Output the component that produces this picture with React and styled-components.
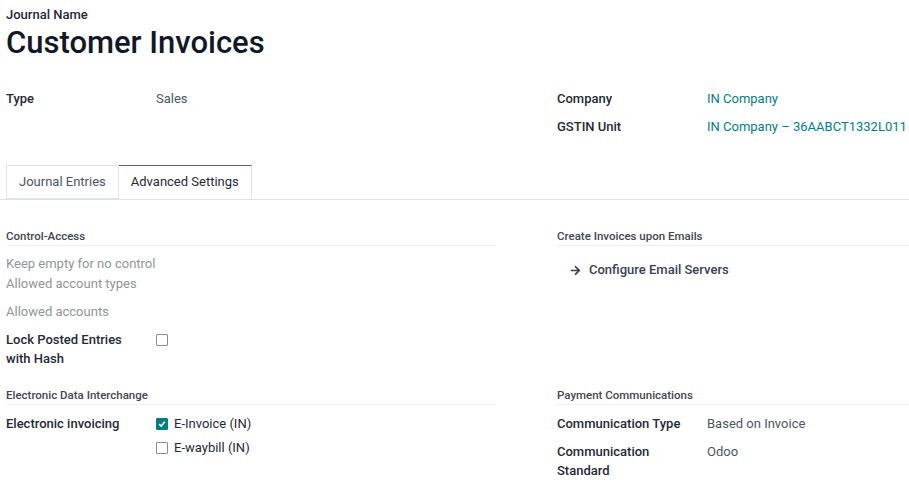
import React from "react";
import styled, { createGlobalStyle } from "styled-components";

const GlobalStyle = createGlobalStyle`
  body {
    margin: 0;
    background: #fff;
    font-family: Roboto, "Liberation Sans", sans-serif;
    font-size: 13px;
    color: #374151;
  }
`;

const Sheet = styled.div`
  width: 909px;
  padding-top: 5px;
`;

const Header = styled.div`
  padding: 0 6px;
`;

const Caption = styled.div`
  font-weight: 500;
  color: #1f2937;
  line-height: 19px;
`;

const Title = styled.h1`
  margin: 1px 0 0;
  font-size: 31px;
  line-height: 36px;
  font-weight: 500;
  color: #111827;
`;

const Columns = styled.div`
  display: grid;
  grid-template-columns: 490px 1fr;
  column-gap: 61px;
  padding: 0 0 0 6px;
  margin-top: ${(p) => p.$top || 0}px;
  row-gap: ${(p) => p.$rowGap || 0}px;
`;

const Group = styled.div`
  display: flex;
  flex-direction: column;
`;

const Row = styled.div`
  display: grid;
  grid-template-columns: 150px 1fr;
  padding: ${(p) => p.$pad ?? 4}px 0;
  margin-top: ${(p) => p.$top || 0}px;
  line-height: 20px;
`;

const Label = styled.div`
  font-weight: 500;
  color: #1f2937;
  padding-right: 15px;
  line-height: ${(p) => p.$lh || 19}px;
`;

const Value = styled.div`
  color: ${(p) => (p.$link ? "#017e84" : "#4b5563")};
`;

const Tabs = styled.div`
  display: flex;
  margin-top: 24px;
  padding-left: 6px;
  border-bottom: 1px solid #dee2e6;
`;

const Tab = styled.div`
  height: ${(p) => (p.$active ? 33 : 32)}px;
  line-height: 32px;
  padding: 0 12px;
  border: 1px solid #dee2e6;
  border-bottom: ${(p) => (p.$active ? "none" : "1px solid #dee2e6")};
  border-top-color: ${(p) => (p.$active ? "#6f5568" : "#dee2e6")};
  border-left-width: ${(p) => (p.$active ? 0 : 1)}px;
  margin-bottom: ${(p) => (p.$active ? -1 : 0)}px;
  background: #fff;
  color: ${(p) => (p.$active ? "#1f2937" : "#4b5563")};
`;

const SectionTitle = styled.div`
  font-size: 11.5px;
  font-weight: 500;
  color: #3f4650;
  line-height: 16px;
  border-bottom: 1px solid #eef0f2;
  padding-bottom: 1px;
`;

const Hint = styled.div`
  color: #8f959a;
  line-height: 20px;
  margin-top: ${(p) => p.$top || 0}px;
`;

const Box = styled.span`
  display: inline-flex;
  align-items: center;
  justify-content: center;
  width: 12px;
  height: 12px;
  box-sizing: border-box;
  border: 1px solid ${(p) => (p.$checked ? "#017e84" : "#8a9096")};
  background: ${(p) => (p.$checked ? "#017e84" : "#fff")};
  border-radius: 1px;
  flex: none;
`;

const CheckLine = styled.div`
  display: flex;
  align-items: center;
  gap: 6px;
  height: ${(p) => p.$h || 20}px;
  color: #1f2937;
  margin-top: ${(p) => p.$top || 0}px;
`;

const ActionLink = styled.div`
  display: flex;
  align-items: center;
  gap: 8px;
  margin: 14px 0 0 13px;
  line-height: 20px;
  font-weight: 500;
  color: #374151;
`;

const CheckBox = ({ checked }) => (
  <Box $checked={checked}>
    {checked && (
      <svg width="8" height="8" viewBox="0 0 8 8">
        <path d="M1.2 4.2 L3.2 6 L6.8 1.8" fill="none" stroke="#fff" strokeWidth="1.6" />
      </svg>
    )}
  </Box>
);

const Arrow = () => (
  <svg width="11" height="11" viewBox="0 0 448 512" fill="#374151">
    <path d="M190.5 66.9l22.2-22.2c9.4-9.4 24.6-9.4 33.9 0L441 239c9.4 9.4 9.4 24.6 0 33.9L246.6 467.3c-9.4 9.4-24.6 9.4-33.9 0l-22.2-22.2c-9.5-9.5-9.3-25 .4-34.3L311.4 296H24c-13.3 0-24-10.7-24-24v-32c0-13.3 10.7-24 24-24h287.4L190.9 101.2c-9.8-9.3-10-24.8-.4-34.3z" />
  </svg>
);

export default function App() {
  return (
    <>
      <GlobalStyle />
      <Sheet>
        <Header>
          <Caption>Journal Name</Caption>
          <Title>Customer Invoices</Title>
        </Header>

        <Columns $top={24}>
          <Group>
            <Row>
              <Label $lh={20}>Type</Label>
              <Value>Sales</Value>
            </Row>
          </Group>
          <Group>
            <Row>
              <Label $lh={20}>Company</Label>
              <Value $link>IN Company</Value>
            </Row>
            <Row>
              <Label $lh={20}>GSTIN Unit</Label>
              <Value $link>IN Company – 36AABCT1332L011</Value>
            </Row>
          </Group>
        </Columns>

        <Tabs>
          <Tab>Journal Entries</Tab>
          <Tab $active>Advanced Settings</Tab>
        </Tabs>

        <Columns $top={28} $rowGap={19}>
          <Group>
            <SectionTitle>Control-Access</SectionTitle>
            <Hint $top={8}>Keep empty for no control</Hint>
            <Hint>Allowed account types</Hint>
            <Hint $top={8}>Allowed accounts</Hint>
            <Row $pad={0} $top={8}>
              <Label>Lock Posted Entries with Hash</Label>
              <CheckLine $h={19}>
                <CheckBox />
              </CheckLine>
            </Row>
          </Group>
          <Group>
            <SectionTitle>Create Invoices upon Emails</SectionTitle>
            <ActionLink>
              <Arrow />
              Configure Email Servers
            </ActionLink>
          </Group>

          <Group>
            <SectionTitle>Electronic Data Interchange</SectionTitle>
            <Row $pad={0} $top={9}>
              <Label $lh={20}>Electronic invoicing</Label>
              <div>
                <CheckLine>
                  <CheckBox checked />
                  E-Invoice (IN)
                </CheckLine>
                <CheckLine $top={4}>
                  <CheckBox />
                  E-waybill (IN)
                </CheckLine>
              </div>
            </Row>
          </Group>
          <Group>
            <SectionTitle>Payment Communications</SectionTitle>
            <Row $pad={0} $top={9}>
              <Label $lh={20}>Communication Type</Label>
              <Value>Based on Invoice</Value>
            </Row>
            <Row $pad={0} $top={8}>
              <Label>Communication Standard</Label>
              <Value>Odoo</Value>
            </Row>
          </Group>
        </Columns>
      </Sheet>
    </>
  );
}
